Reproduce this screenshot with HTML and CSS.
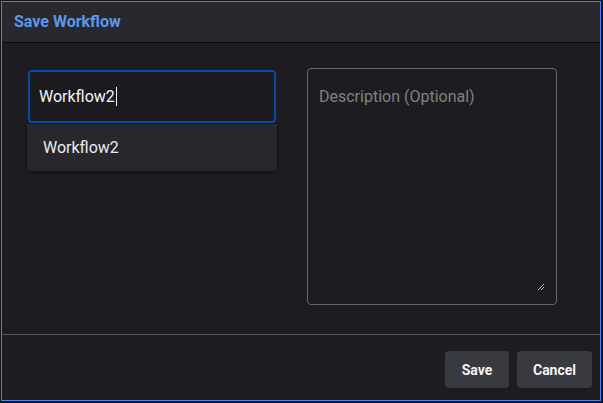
FILE: index.html
```html
<!DOCTYPE html>
<html>
<head>
<meta charset="utf-8">
<link rel="stylesheet" href="styles.css">
</head>
<body>
<div class="frame">
  <div class="dialog">
    <div class="header">Save Workflow</div>
    <div class="content">
      <div class="name-col">
        <div class="name-input"><span class="value">Workflow2</span><span class="caret"></span></div>
        <div class="suggestions">
          <div class="suggestion">Workflow2</div>
        </div>
      </div>
      <div class="desc">
        <span class="placeholder">Description (Optional)</span>
        <svg class="grip" width="8" height="8" viewBox="0 0 8 8"><path d="M1 7L7 1M4 7L7 4" stroke="#bbb" stroke-width="1" fill="none"/></svg>
      </div>
    </div>
    <div class="footer">
      <button class="btn btn-save">Save</button>
      <button class="btn btn-cancel">Cancel</button>
    </div>
  </div>
</div>
</body>
</html>
```
FILE: styles.css
```css
html, body {
  margin: 0;
  padding: 0;
  background: #141416;
  font-family: Roboto, "Noto Sans", sans-serif;
}
.frame {
  padding: 1px;
}
.dialog {
  width: 600px;
  height: 400px;
  box-sizing: border-box;
  border: 1px solid #4285f4;
  background: #1d1d21;
  display: flex;
  flex-direction: column;
}
.header {
  height: 40px;
  flex: none;
  background: #28282e;
  border-bottom: 1px solid #0c0c0e;
  color: #5e96ea;
  font-weight: 700;
  font-size: 16px;
  line-height: 40px;
  padding-left: 12px;
}
.content {
  flex: 1;
  display: flex;
  gap: 30px;
  padding: 26px 0 0 25px;
  border-bottom: 1px solid #55555a;
}
.name-col {
  width: 250px;
  display: flex;
  flex-direction: column;
}
.name-input {
  margin: 1px 1px 0 1px;
  height: 53px;
  box-sizing: border-box;
  border: 2px solid #0a4aa3;
  border-radius: 4px;
  background: #1b1b1f;
  display: flex;
  align-items: center;
  padding-left: 9px;
  color: #f5f5f5;
  font-size: 16px;
}
.caret {
  width: 1px;
  height: 19px;
  background: #f0f0f0;
  margin-left: 1px;
}
.suggestions {
  margin-top: 1px;
  background: #27272d;
  border-radius: 0 0 5px 5px;
  height: 47px;
  display: flex;
  align-items: center;
  box-shadow: 0 2px 4px rgba(0,0,0,0.35);
}
.suggestion {
  padding-left: 16px;
  color: #ececec;
  font-size: 16px;
}
.desc {
  position: relative;
  width: 250px;
  height: 237px;
  box-sizing: border-box;
  border: 1px solid #65656a;
  border-radius: 4px;
  margin-top: -1px;
  padding: 18px 11px;
  color: #808085;
  font-size: 16px;
}
.grip {
  position: absolute;
  right: 11px;
  bottom: 13px;
}
.footer {
  height: 65px;
  flex: none;
  display: flex;
  justify-content: flex-end;
  align-items: flex-start;
  gap: 8px;
  padding: 16px 8px 0 0;
  box-sizing: border-box;
}
.btn {
  height: 37px;
  border: none;
  border-radius: 4px;
  background: #393940;
  color: #f4f4f4;
  font-family: Roboto, "Noto Sans", sans-serif;
  font-weight: 700;
  font-size: 14px;
  padding: 0;
}
.btn-save {
  width: 64px;
}
.btn-cancel {
  width: 75px;
}
```
